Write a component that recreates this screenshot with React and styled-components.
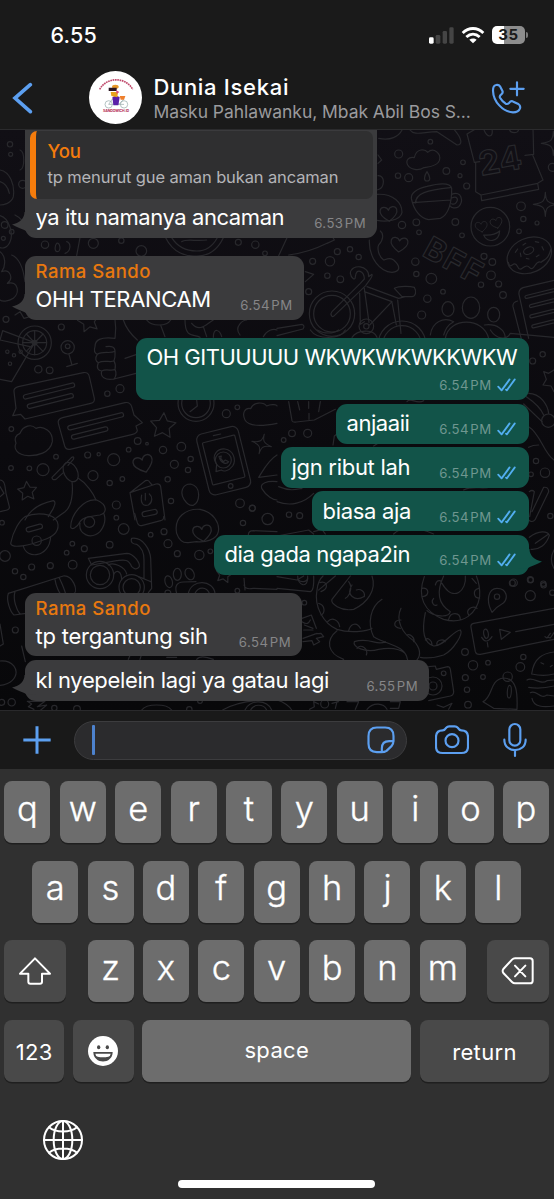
import React from "react";
import styled, { createGlobalStyle } from "styled-components";

const BLUE = "#5c9ff0";
const INCOMING = "#3b3b3d";
const OUTGOING = "#125449";

const GlobalStyle = createGlobalStyle`
  * { box-sizing: border-box; }
  body { margin: 0; background: #303030; font-family: Inter, "Liberation Sans", sans-serif; }
`;

const Screen = styled.main`
  width: 554px;
  height: 1199px;
  display: flex;
  flex-direction: column;
  overflow: hidden;
  background: #303030;
  color: #fff;
`;

/* ---------- Header ---------- */

const Header = styled.header`
  height: 130px;
  background: #1a1a1a;
  border-bottom: 1px solid #2b2b2d;
  display: flex;
  flex-direction: column;
`;

const StatusBar = styled.div`
  height: 64px;
  padding: 6px 26px 0 50.5px;
  display: flex;
  align-items: center;
  justify-content: space-between;
`;

const Clock = styled.span`
  font-size: 21.5px;
  font-weight: 500;
  letter-spacing: 0.2px;
`;

const StatusIcons = styled.div`
  display: flex;
  align-items: center;
  gap: 7px;
`;

const Battery = styled.div`
  display: flex;
  align-items: center;
  gap: 1px;
`;

const BatteryBody = styled.div`
  width: 33px;
  height: 18px;
  border-radius: 5px;
  background: linear-gradient(to right, #fff 36%, #8d8d8d 36%);
  color: #1a1a1a;
  font-size: 15px;
  font-weight: 700;
  line-height: 18px;
  letter-spacing: 0.5px;
  text-align: center;
`;

const BatteryTip = styled.div`
  width: 2px;
  height: 6px;
  border-radius: 0 3px 3px 0;
  background: #7a7a7a;
`;

const NavBar = styled.div`
  flex: 1;
  padding: 2px 29px 0 12px;
  display: flex;
  align-items: center;
`;

const BackButton = styled.button`
  all: unset;
  width: 76.5px;
  height: 32px;
  display: flex;
`;

const Avatar = styled.svg`
  width: 53.4px;
  height: 53.4px;
  border-radius: 50%;
  flex: none;
`;

const Titles = styled.div`
  flex: 1;
  margin-left: 11.5px;
  padding-top: 1px;
  white-space: nowrap;
`;

const Title = styled.h1`
  margin: 0;
  font-size: 22px;
  line-height: 27px;
  font-weight: 500;
  letter-spacing: 0.7px;
`;

const Subtitle = styled.div`
  font-size: 17.5px;
  line-height: 22px;
  letter-spacing: -0.05px;
  color: #9b9b9e;
`;

/* ---------- Chat ---------- */

const Chat = styled.section`
  position: relative;
  height: 580px;
  overflow: hidden;
  background: linear-gradient(#110f15, #0b0a0e 55%, #08080a);
`;

const Wallpaper = styled.svg`
  position: absolute;
  inset: 0;
  fill: none;
  stroke: #28282c;
  stroke-width: 3.6;
  stroke-linecap: round;
  stroke-linejoin: round;
`;

const DoodleText = styled.text`
  font-family: Inter, sans-serif;
  font-weight: 700;
`;

const MessageList = styled.div`
  position: relative;
  display: flex;
  flex-direction: column;
  gap: 18.5px;
  padding: 0 25.5px 0 25px;
`;

const Group = styled.div`
  display: flex;
  flex-direction: column;
  gap: 3.5px;
  align-items: ${(p) => (p.$out ? "flex-end" : "flex-start")};
`;

const BubbleBox = styled.div`
  position: relative;
  width: ${(p) => p.$w}px;
  height: ${(p) => p.$h}px;
  border-radius: ${(p) => (p.$cut ? "0 0 11px 11px" : "11px")};
  background: ${(p) => (p.$out ? OUTGOING : INCOMING)};
  padding: ${(p) => (p.$cut ? "1px" : "5px")} ${(p) => (p.$out ? "13px 7.5px 10.5px" : "11px 7.5px 10.5px")};
  display: flex;
  flex-direction: column;
  justify-content: space-between;
`;

const Line = styled.div`
  display: flex;
  flex-direction: ${(p) => (p.$stacked ? "column" : "row")};
  flex-grow: ${(p) => (p.$stacked ? 1 : 0)};
  align-items: flex-end;
  justify-content: space-between;
  margin-top: ${(p) => (p.$stacked ? "1px" : "auto")};
`;

const Body = styled.p`
  margin: 0;
  align-self: flex-start;
  white-space: nowrap;
  font-size: 22px;
  line-height: 26px;
  letter-spacing: ${(p) => p.$ls}px;
`;

const Sender = styled.div`
  font-size: 18.5px;
  line-height: 21px;
  font-weight: 500;
  letter-spacing: 0.5px;
  color: #e8780f;
`;

const Meta = styled.div`
  display: flex;
  align-items: center;
  gap: 5px;
  margin-bottom: -0.8px;
  white-space: nowrap;
  font-size: 13.2px;
  line-height: 16px;
  letter-spacing: 0.4px;
  word-spacing: -2.6px;
  color: ${(p) => (p.$out ? "#6f9790" : "#868688")};
`;

const Ticks = styled.svg`
  width: 19px;
  height: 14px;
  fill: none;
  stroke: #52aef0;
  stroke-width: 1.8;
  stroke-linecap: round;
  stroke-linejoin: round;
`;

const TailShape = styled.svg`
  position: absolute;
  bottom: 2px;
  width: 24px;
  height: 24px;
  fill: ${(p) => (p.$out ? OUTGOING : INCOMING)};
  ${(p) => (p.$out ? "right: -13.5px; transform: scaleX(-1);" : "left: -13px;")}
`;

const Quote = styled.blockquote`
  margin: 0 -6.5px 0 -6px;
  height: 68px;
  padding: 9px 12px 0;
  border-left: 6px solid #f57c0c;
  border-radius: 7px;
  background: #2f2f30;
  white-space: nowrap;
`;

const QuoteText = styled.div`
  margin-top: 5px;
  font-size: 16.5px;
  line-height: 20px;
  letter-spacing: -0.13px;
  color: #b4b4b8;
`;

const QuoteAuthor = styled.div`
  font-size: 18.5px;
  line-height: 22px;
  font-weight: 500;
  letter-spacing: -0.1px;
  color: #f57c0c;
`;

/* ---------- Composer ---------- */

const Composer = styled.div`
  height: 59px;
  flex: none;
  background: #191919;
  border-top: 1px solid #29292b;
  padding: 0 26px 0 22px;
  display: flex;
  align-items: center;
`;

const Field = styled.div`
  width: 332.5px;
  height: 39px;
  margin: 0 28.5px 0 22px;
  padding: 0 10.5px 0 16.5px;
  border: 1px solid #3c3c3e;
  border-radius: 20px;
  background: #2b2b2d;
  display: flex;
  align-items: center;
  justify-content: space-between;
`;

const Caret = styled.span`
  width: 3.5px;
  height: 29.5px;
  border-radius: 1px;
  background: #4d82cd;
`;

const LineIcon = styled.svg`
  display: block;
  flex: none;
  fill: none;
  stroke: ${(p) => p.$color || BLUE};
  stroke-width: ${(p) => p.$stroke || 6.5};
  stroke-linecap: round;
  stroke-linejoin: round;
`;

const MicSlot = styled.div`
  margin-left: auto;
`;

/* ---------- Keyboard ---------- */

const Keyboard = styled.section`
  flex: 1;
  background: #303030;
  padding: 12px 5px 0 4.4px;
  display: flex;
  flex-direction: column;
  gap: 17.7px;
`;

const KeyRow = styled.div`
  display: flex;
  justify-content: ${(p) => p.$justify || "center"};
`;

const Keys = styled.div`
  display: flex;
  gap: 9.4px;
`;

const Key = styled.button`
  all: unset;
  box-sizing: border-box;
  width: ${(p) => p.$w || 46}px;
  height: 62px;
  border-radius: 8px;
  background: ${(p) => (p.$dark ? "#494949" : "#6d6d6d")};
  box-shadow: 0 1.5px 0 #1f1f1f;
  display: flex;
  align-items: center;
  justify-content: center;
  font-size: 34.5px;
  font-weight: 300;
  -webkit-text-stroke: 0.35px #fff;
  padding-bottom: 7.5px;
`;

const WordKey = styled(Key)`
  font-size: 22px;
  font-weight: 400;
  -webkit-text-stroke: 0;
  letter-spacing: 0.35px;
  padding: ${(p) => (p.$drop ? "2px 0 0" : "0 0 2px")};
`;

const IconKey = styled(Key)`
  padding: 0;
`;

const BottomArea = styled.div`
  padding: 20.5px 0 0 38.5px;
`;

const HomeBar = styled.div`
  width: 197px;
  height: 7.5px;
  border-radius: 4px;
  background: #fff;
  margin: 2.5px auto 0;
`;

/* ---------- Small parts ---------- */

const Dots = ({ at }) => at.map(([x, y, r], i) => <circle key={i} cx={x} cy={y} r={r} />);

const Star = ({ x, y, r, turn = 0 }) => {
  const pts = Array.from({ length: 10 }, (_, i) => {
    const a = (Math.PI * i) / 5 - Math.PI / 2;
    const d = i % 2 ? r * 0.5 : r;
    return `${(Math.cos(a) * d).toFixed(1)},${(Math.sin(a) * d).toFixed(1)}`;
  }).join(" ");
  return <polygon points={pts} transform={`translate(${x} ${y}) rotate(${turn})`} />;
};

const Heart = ({ x, y, s = 1, turn = 0 }) => (
  <path
    transform={`translate(${x} ${y}) rotate(${turn}) scale(${s})`}
    d="M0 24C-18 12 -28 2 -25 -10C-22 -22 -5 -22 0 -9C5 -22 22 -22 25 -10C28 2 18 12 0 24Z"
  />
);

const Pill = ({ x, y, w, h, turn = 0, r }) => (
  <rect x={-w / 2} y={-h / 2} width={w} height={h} rx={r ?? h / 2} transform={`translate(${x} ${y}) rotate(${turn})`} />
);

const Sparkle = ({ x, y, s = 1, turn = 0 }) => (
  <path
    transform={`translate(${x} ${y}) rotate(${turn}) scale(${s})`}
    d="M0 -36C1 -10 6 -4 36 0C6 4 1 10 0 36C-1 10 -6 4 -36 0C-6 -4 -1 -10 0 -36Z"
  />
);

const region = (x, y) => `translate(${x} ${y - 130}) scale(0.33333)`;

const ChatWallpaper = () => (
  <Wallpaper width="554" height="580" viewBox="0 0 554 580" aria-hidden="true">
    <g transform={region(277, 125)}>
      <Dots at={[[365,87,12],[460,50,7],[558,112,7],[508,138,10],[549,152,6],[569,183,9],[395,158,12],[363,152,8],[375,300,11],[418,292,10],[426,322,7],[535,291,10],[555,331,7],[415,410,11],[418,447,8],[463,461,16],[498,500,7],[451,521,11],[434,570,12],[612,479,8],[621,394,9],[646,411,10],[642,451,13],[665,477,9],[678,510,10],[732,244,13],[739,282,8],[726,319,7],[780,294,6],[151,452,8],[190,463,10],[181,380,9],[219,373,8],[159,409,14],[245,396,8],[107,409,9],[95,500,9],[826,127,12]]} />
      <path d="M440 128C425 138 400 134 392 120C385 106 395 94 412 98C418 68 445 72 452 82C470 66 494 85 487 107C480 126 450 126 440 128Z" />
      <path d="M450 140C440 155 440 168 450 168C462 168 460 155 450 140Z" />
      <path d="M403 220C410 255 430 280 455 284L490 280C515 270 525 230 524 190C520 170 480 176 450 184C425 190 402 200 403 220ZM524 208C555 195 560 230 545 245C535 252 522 248 520 243M524 219C540 212 545 222 538 232C534 238 528 238 524 236M416 234C415 205 450 195 520 188M407 233L521 225" />
      <path d="M592 14L570 27L592 112M592 112L608 110M744 91L770 88L768 10M596 112V200L612 210L782 175L798 165L767 90M612 210L614 227L785 193L782 175M620 12C630 40 650 40 645 12M697 12C700 28 728 25 724 12" />
      <DoodleText x="612" y="152" fontSize="100" transform="rotate(-10 612 152)">24</DoodleText>
      <path d="M397 12C410 35 440 20 480 20L540 60C558 60 555 40 530 12M305 40C340 48 365 35 375 15" />
      <Sparkle x={805} y={238} />
      <Sparkle x={829} y={55} />
      <circle cx="640" cy="305" r="58" />
      <Heart x={613} y={304} s={0.7} turn={-8} />
      <Heart x={658} y={293} s={0.7} turn={-15} />
      <path d="M620 330Q650 333 668 318C666 352 630 355 620 330Z" />
      <ellipse cx="757" cy="391" rx="69" ry="52" transform="rotate(-24 757 391)" />
      <ellipse cx="755" cy="377" rx="16" ry="10" transform="rotate(-24 755 377)" />
      <path d="M694 412C700 440 710 400 722 425C732 448 742 410 758 428C772 442 775 402 792 412C802 402 812 408 822 372M715 382L722 372M732 395L730 384M738 360L746 355M775 350L785 352M795 365L800 375M778 395L786 390M748 400L756 402" />
      <DoodleText x="432" y="390" fontSize="94" letterSpacing="6" transform="rotate(29 432 390)">BFF</DoodleText>
      <path d="M277 345C275 400 310 440 345 442C370 440 372 425 350 405C335 395 325 405 320 405C305 395 300 370 305 360C320 345 320 325 310 318" />
      <Heart x={367} y={357} turn={5} />
      <path d="M300 208C350 205 375 235 375 262C370 290 320 290 300 286" />
      <Heart x={335} y={265} turn={-5} />
      <path d="M303 152C325 150 325 190 300 195M303 90L314 105L303 115M30 338L5 392M35 390C80 385 120 370 150 355L172 345L168 338M85 440L110 448L85 470" />
      <circle cx="165" cy="566" r="68" /><circle cx="165" cy="566" r="55" />
      <path d="M165 560L250 475L262 462C262 440 238 425 235 455C235 470 222 458 220 445C222 415 278 420 275 455L285 448C290 455 268 475 266 482L172 572C165 580 158 568 165 560M248 505L250 598L262 590M262 490L276 592M270 485L365 520L385 515M262 500L345 530L278 600M352 490C370 480 405 485 412 487C420 500 415 515 405 515L375 515ZM345 532L358 600M362 525L372 625" />
      <circle cx="268" cy="604" r="22" /><circle cx="268" cy="604" r="8" />
      <circle cx="375" cy="660" r="72" /><circle cx="375" cy="660" r="58" />
      <path d="M0 610L75 598Q85 602 78 612L0 632" />
      <ellipse cx="513" cy="552" rx="18" ry="22" /><ellipse cx="582" cy="548" rx="26" ry="32" /><ellipse cx="650" cy="569" rx="18" ry="22" />
      <path d="M505 640C515 575 620 575 635 640M460 630C465 590 500 575 530 590C510 600 505 615 500 630M622 600C660 595 685 615 685 640" />
      <path d="M735 650L708 545Q706 532 722 528M755 640L726 508Q724 494 738 488L831 466" />
      <Pill x={800} y={503} w={115} h={9} turn={-14} />
      <Pill x={806} y={532} w={100} h={9} turn={-14} />
      <Pill x={812} y={562} w={110} h={9} turn={-14} />
      <Pill x={818} y={592} w={110} h={9} turn={-14} />
    </g>

    <g transform={region(0, 125)}>
      <Dots at={[[30,58,8],[32,88,6],[280,355,15],[135,359,11],[364,347,8],[424,378,16],[715,352,9],[766,359,11],[795,385,7],[68,178,12],[18,583,9],[14,300,10],[35,320,7],[10,340,6]]} />
      <path d="M0 135C30 140 45 180 40 215C35 235 10 240 0 240M0 272C30 280 40 330 30 350C20 375 0 368 0 368M0 380C15 390 20 420 5 440C30 430 42 460 22 475C55 465 60 505 40 520C25 530 5 530 0 525M0 170C15 175 25 190 28 205M60 75C75 80 75 130 60 135M45 270C65 280 70 290 75 310M35 390C60 400 70 430 75 470" />
      <path d="M497 338C520 385 560 395 590 393M670 338C650 380 620 393 590 393M515 338C535 370 560 378 590 378C620 378 640 360 652 338M545 350C560 340 590 350 620 345M240 338L230 392M170 355C180 350 185 380 172 380C162 380 165 360 170 355ZM200 350C215 355 212 380 195 385M45 570L60 560L72 580L90 575" />
    </g>

    <g transform={region(0, 320)}>
      <Dots at={[[184,21,9],[115,148,11],[149,151,10],[322,221,8],[360,206,12],[34,327,7],[168,410,7],[33,444,7],[88,445,7],[129,449,18],[263,405,9],[296,403,5],[341,419,18],[279,467,15],[329,489,8],[367,477,7],[386,389,7],[413,363,10],[441,371,4],[489,390,11],[544,380,13],[523,433,12],[572,417,8],[564,450,8],[503,478,8],[349,555,12],[349,593,7],[513,543,8],[720,550,13],[757,565,9],[679,281,12],[712,262,7],[22,95,5],[42,106,5],[62,95,5],[30,131,5],[104,68,50],[104,68,36],[104,68,7],[203,82,20],[203,79,7]]} />
      <path d="M104 32V104M68 68H140M79 42L129 94M129 42L79 94M8 32L104 68L35 185L0 178M8 32L0 60M0 60L90 80M207 103L215 132M200 140L232 130" />
      <Star x={266} y={4} r={34} turn={-12} /><Star x={489} y={318} r={40} turn={4} /><Star x={82} y={514} r={30} turn={-5} />
      <path d="M345 0C350 30 345 50 345 55C300 50 285 60 285 80C280 95 285 100 292 103C283 115 288 125 295 128C288 145 295 152 305 153C300 170 315 182 342 177L408 160M292 103C310 92 330 102 345 94C345 80 335 78 318 80M295 128C312 118 335 130 342 122C347 110 345 98 345 94M305 153C320 145 335 155 345 148C348 138 345 128 342 122M345 148C350 160 348 170 342 177M370 0C380 30 395 45 412 60M375 115L408 104" />
      <path d="M440 0C455 20 500 20 512 0M482 16L495 50M555 0C555 60 585 40 600 52M575 10C600 40 620 10 640 0M640 52C640 20 660 30 665 50M790 50C800 30 820 25 831 30M610 20L620 50M720 45C700 20 730 0 740 0" />
      <path d="M42 215Q40 205 55 200L250 158Q265 155 268 170L283 235Q285 248 272 250L75 297L62 283L38 287L48 265Z" />
      <Pill x={147} y={213} w={158} h={13} turn={-14} /><Pill x={151} y={243} w={142} h={13} turn={-14} />
      <path d="M175 310Q172 298 188 293L375 248Q390 245 395 260L402 285L427 308L408 318L412 332Q410 340 398 343L210 388Q198 390 194 378Z" />
      <Pill x={287} y={304} w={172} h={13} turn={-14} /><Pill x={269} y={339} w={112} h={13} turn={-14} />
      <path d="M60 340C70 315 95 312 108 325C130 315 160 335 157 365C150 400 110 408 85 407C50 405 40 385 48 370C42 355 48 345 60 340Z" />
      <ellipse cx="212" cy="456" rx="20" ry="31" transform="rotate(-28 212 456)" />
      <path d="M156 472L215 412Q224 408 220 418L204 436M156 472Q156 482 168 478L190 458M216 485C220 520 215 560 195 575L160 600M235 475C260 490 280 520 288 540M75 600C90 570 120 550 160 542Q170 545 160 565L145 590" />
      <Heart x={430} y={430} s={1.15} turn={-18} />
      <Pill x={671} y={422} w={128} h={188} turn={-14} r={18} />
      <Pill x={671} y={420} w={100} h={130} turn={-14} r={3} />
      <circle cx="670" cy="420" r="24" />
      <path d="M648 455L650 433C630 405 655 385 675 387C700 390 710 420 698 438C685 455 670 455 664 450ZM657 410C662 430 680 435 686 425L676 420L670 425L662 415L664 408Z" />
      <circle cx="692" cy="498" r="7" /><path d="M640 347L662 342" />
      <path d="M735 300C725 280 735 262 752 266C760 245 790 245 800 258C815 250 831 255 831 258M735 300C745 318 780 320 831 310" />
      <circle cx="588" cy="250" r="54" /><circle cx="588" cy="250" r="43" /><path d="M588 222L592 258L570 275" />
      <Sparkle x={785} y={372} s={0.85} turn={15} />
      <path d="M831 405C805 420 790 450 776 472L831 465M831 485C800 482 780 490 785 505C800 530 820 540 831 540" />
      <path d="M405 600L390 518L436 482Q446 478 450 488L456 495M390 518L468 492Q480 490 482 500L495 600M425 525C420 550 430 560 445 555C458 548 458 530 448 522M436 520V540" />
      <path d="M572 492C545 492 540 520 552 538C560 550 570 558 580 556C600 545 605 500 572 492ZM0 480C15 480 15 500 18 520L28 560C30 570 20 570 0 575M0 500L12 520L0 530" />
    </g>

    <g transform={region(277, 330)}>
      <Dots at={[[20,330,7],[45,310,10],[92,310,12],[36,554,8],[68,557,9],[797,73,8],[767,93,9],[777,393,8],[804,428,14],[762,433,7],[820,558,8],[710,758,11],[761,750,8],[800,766,8]]} />
      <path d="M35 215L45 272Q48 278 58 276L112 270L175 238M62 215L68 240M95 215V235M125 245L130 215M96 250V268M168 345L172 318L180 312" />
      <path d="M0 515C40 530 80 520 110 490M5 470C40 485 60 478 75 475M0 618L95 600L110 612M110 605L135 598L145 612M390 215C400 200 420 225 440 212M290 348L310 335M560 480C590 465 620 480 640 470M350 612C370 590 420 590 470 612" />
      <path d="M100 0C120 30 190 30 205 0M225 22C240 0 290 -5 300 22M640 0C660 30 690 30 700 10L831 22M120 0C140 12 170 12 185 0" />
      <path d="M831 120L815 130L800 125L808 148L798 165L822 168L831 185M755 190C790 190 812 225 815 250M740 222L795 275M748 200C770 215 790 230 800 255M755 290C790 310 800 370 831 390M785 345C770 345 762 348 755 352" />
      <circle cx="814" cy="272" r="20" />
      <path d="M757 485Q765 478 772 485L758 560M755 570Q765 580 775 568L815 485Q815 470 800 472L765 545M757 622C785 600 812 603 817 616C808 645 785 660 762 658M775 640L815 612M831 660C820 680 822 700 831 715" />
      <path d="M0 740L60 750L80 738M62 748C75 760 90 755 92 745M175 738C150 760 130 775 125 780" />
    </g>

    <g transform={region(0, 500)}>
      <Dots at={[[15,168,16],[6,68,7],[95,201,9],[45,214,8],[70,231,8],[151,197,9],[218,194,13],[217,131,7],[200,158,7],[253,146,9],[329,134,10],[371,87,16],[452,104,7],[492,95,9],[504,131,12],[532,161,9],[598,165,14],[631,154,7],[803,57,17],[729,69,8],[757,24,9],[712,272,7],[46,390,9],[268,66,16],[300,225,41],[300,225,29],[395,262,38],[395,262,26],[110,122,14]]} />
      <path d="M32 130C40 90 60 60 75 50C110 35 160 40 172 65C180 90 165 110 130 120C90 135 35 148 32 130ZM70 138C78 178 148 175 152 110" />
      <Pill x={103} y={84} w={50} h={14} turn={-15} />
      <Pill x={449} y={39} w={46} h={15} turn={-12} />
      <path d="M404 40L412 68Q416 80 428 76L482 62Q492 60 491 50" />
      <path d="M240 70C235 100 270 122 300 95C312 80 318 60 312 42M212 82C212 45 250 -5 290 0C325 15 320 40 300 45C270 50 250 50 240 65C230 85 215 90 212 82" />
      <path d="M265 175L380 160C402 160 420 190 418 200C410 212 400 205 395 200C385 175 370 180 350 182L275 195ZM395 115C430 110 450 150 452 175L455 265L445 278M395 115C390 128 400 132 410 133C430 145 432 170 432 180V235M340 225C350 205 365 215 365 240M325 195C340 185 375 200 380 222M415 230C430 235 440 240 452 245" />
      <path d="M25 280L190 228C218 225 235 270 222 282M25 280C18 300 30 335 42 345L78 340M45 275C38 300 50 330 60 342M165 238C168 260 178 278 182 282M178 234C188 255 194 270 197 282" />
      <path d="M530 100C520 50 560 25 600 28C640 35 660 70 655 95C650 120 615 128 590 125L565 128Q540 130 530 100Z" />
      <Heart x={607} y={98} s={1.1} turn={-8} />
      <ellipse cx="506" cy="245" rx="11" ry="18" transform="rotate(-15 506 245)" /><ellipse cx="532" cy="223" rx="12" ry="18" /><ellipse cx="569" cy="222" rx="13" ry="18" transform="rotate(-25 569 222)" />
      <path d="M495 278C495 265 515 270 512 280M530 280Q520 248 550 246L588 245M565 280C575 235 640 240 645 280M585 280C595 258 620 260 628 280" />
      <Star x={672} y={224} r={26} turn={10} />
      <path d="M735 270L732 235M732 255Q735 270 760 265L831 268M745 105Q745 92 760 92L831 95M0 372L10 432L0 438M0 483C40 480 55 510 45 530C35 550 10 556 0 556M65 438L76 485M500 472H530M590 478C600 465 620 470 640 478M385 478L392 462M420 478L425 462" />
    </g>

    <g transform={region(277, 570)}>
      <Dots at={[[706,39,9],[760,29,9],[799,41,8],[760,77,15],[826,68,8],[564,246,10],[588,286,14],[633,278,7],[565,323,9],[618,321,7],[570,359,8],[573,404,10],[739,261,8],[730,291,13],[660,80,8],[692,320,14],[468,348,27],[468,348,12],[82,98,7],[143,402,12],[500,310,7]]} />
      <path d="M645 127C625 90 635 55 660 55C690 55 695 85 678 100C660 110 655 115 645 127ZM831 115L590 160Q580 162 582 172L595 245Q598 255 610 253L831 208M614 202Q628 225 645 200M631 218L633 231M668 178L673 208L700 187ZM716 185L831 163M804 200L810 204L820 190M814 202L820 204L831 188" />
      <Pill x={627} y={191} w={14} h={28} turn={-10} />
      <path d="M764 312C770 262 800 250 831 246M764 312Q800 320 831 312M750 330C770 318 790 348 810 332L831 330M755 352Q790 358 831 348M760 368C780 358 790 390 810 375L831 378M765 385C770 412 800 412 831 408M792 278L800 282M820 290L826 286" />
      <path d="M618 395C650 380 635 330 680 324C720 325 722 370 720 418M618 395L650 415L720 418" />
      <Pill x={697} y={365} w={12} h={38} turn={3} />
      <path d="M455 290L475 288L478 298L512 290Q518 290 520 298L530 365Q530 375 520 378L455 392" />
      <path d="M120 60C110 110 140 160 180 178C215 190 270 185 285 175M285 18C300 60 270 100 230 118C190 125 160 100 165 88L220 18M315 88C280 110 270 160 290 200C330 225 385 225 392 270M180 182C145 210 150 250 200 268M372 115C355 150 375 190 410 212C430 235 432 255 420 270M325 215C300 230 280 200 232 215C225 230 265 250 305 238C350 230 390 240 390 265M120 60C122 40 130 25 138 18" />
      <path d="M128 38C150 30 158 55 132 65M125 100C145 105 145 130 132 135M152 155C165 140 185 150 188 170M215 182C220 160 240 155 250 175M215 35C230 55 215 80 205 85M238 60C250 55 265 65 262 80M225 45C205 75 235 95 260 80M240 235C250 220 275 235 268 255M372 150C350 150 345 170 370 175M390 195C400 190 415 205 410 215" />
      <path d="M442 20C420 80 440 125 500 148C560 165 600 130 608 80C610 50 605 35 598 18M500 18C480 60 480 100 520 125C515 145 470 140 450 122M565 18C570 60 530 100 495 40M445 128C430 200 450 222 470 228C500 230 530 180 550 180C560 190 530 240 500 255Q460 268 430 262M435 55C455 50 460 75 438 80M470 85C460 95 470 110 480 105M490 45C500 30 480 25 475 45M515 148C520 125 550 125 550 150M575 135C565 120 585 105 600 115M608 85C590 85 585 60 605 55M598 40L585 25M445 210C450 200 465 210 465 225M480 225C475 210 500 205 505 215" />
      <path d="M0 55L100 65Q112 62 110 18M62 18C60 45 95 60 92 18M75 145L103 135L118 175M78 205L120 190M82 165L108 175M80 180H108M78 215L105 212L110 225L128 215L118 205L140 200L132 190L112 192M75 155C90 165 95 160 100 150" />
      <path d="M0 390C20 395 40 410 45 422M110 395L112 410L98 418M180 395L175 415M110 395L125 402M165 400L185 395M210 395H245L235 418M270 418C290 395 320 400 330 418M340 395H370L365 415H340M480 405L500 412L525 400L515 418" />
    </g>

    <g transform={region(0, 700)}>
      <Dots at={[[35,7,11],[5,7,9],[163,24,8],[231,27,10],[600,3,7],[568,28,8]]} />
      <path d="M82 4H135L112 20L140 15L120 32M82 4L95 12L85 20L102 28M425 30C440 10 500 10 515 30M668 30C700 10 750 2 790 0M735 30C745 0 800 -5 815 30M752 30C760 12 790 10 800 30" />
    </g>
  </Wallpaper>
);

const Tail = ({ out }) => (
  <TailShape $out={out} viewBox="0 0 24 24">
    <path d="M12.5 0C12.5 6 8 11 0 12.5C5 15.5 11 17 15 19.5L24 20V0Z" />
  </TailShape>
);

const DoubleTick = () => (
  <Ticks viewBox="0 0 19 14">
    <path d="M1.2 8.6L4.6 12.4L12.6 1.4M9 11.6L9.8 12.4L17.8 1.4" />
  </Ticks>
);

const Bubble = ({ out, w, h, sender, text, ls, time, tail, stacked, cut, children }) => (
  <BubbleBox $out={out} $w={w} $h={h} $cut={cut}>
    {tail && <Tail out={out} />}
    {sender && <Sender>{sender}</Sender>}
    {children}
    <Line $stacked={stacked}>
      <Body $ls={ls}>{text}</Body>
      <Meta $out={out}>
        {time}
        {out && <DoubleTick />}
      </Meta>
    </Line>
  </BubbleBox>
);

const letters = (s) => s.split("").map((k) => <Key key={k}>{k}</Key>);

export default function App() {
  return (
    <Screen>
      <GlobalStyle />

      <Header>
        <StatusBar>
          <Clock>6.55</Clock>
          <StatusIcons>
            <svg width="25" height="17" viewBox="0 0 75 51">
              <rect x="0" y="31" width="14" height="19" rx="4" fill="#fff" />
              <rect x="20" y="24" width="14" height="26" rx="4" fill="#454545" />
              <rect x="41" y="12" width="13" height="38" rx="4" fill="#454545" />
              <rect x="61" y="1" width="13" height="49" rx="4" fill="#454545" />
            </svg>
            <svg width="24" height="18" viewBox="0 0 72 54" fill="none" stroke="#fff" strokeWidth="8.5">
              <path d="M5 21C23 3 49 3 67 21" />
              <path d="M16 33C28 22 44 22 56 33" />
              <path d="M36 52L25 41C31 36 41 36 47 41Z" fill="#fff" stroke="none" />
            </svg>
            <Battery>
              <BatteryBody>35</BatteryBody>
              <BatteryTip />
            </Battery>
          </StatusIcons>
        </StatusBar>
        <NavBar>
          <BackButton aria-label="Back">
            <LineIcon width="22" height="32" viewBox="0 0 66 96" $stroke={11}>
              <path d="M55 8L9 48L55 89" strokeLinejoin="miter" />
            </LineIcon>
          </BackButton>
          <Avatar viewBox="265 213 160 160">
            <rect x="265" y="213" width="160" height="160" fill="#fff" />
            <path d="M297 268C318 230 375 230 396 268" fill="none" stroke="#c04a6c" strokeWidth="5" strokeDasharray="5 2" />
            <g fill="none" stroke="#8fa6a6" strokeWidth="2">
              <circle cx="324" cy="313" r="11" />
              <circle cx="370" cy="313" r="11" />
              <path d="M324 313L335 297L355 313L370 297M324 313H370" />
            </g>
            <path d="M335 292Q346 284 357 292L353 316H338Z" fill="#5a1fa8" />
            <path d="M330 276H352L350 292L332 288Z" fill="#e7a21c" />
            <ellipse cx="344" cy="260" rx="10" ry="6" fill="#e8992a" />
            <path d="M324 263H348V273H324Z" fill="#2a1420" />
            <path d="M346 270L356 276L348 282Z" fill="#d9477c" />
            <path d="M357 288H374L370 299H360Z" fill="#ef7f2c" />
            <text x="346" y="335" textAnchor="middle" fontSize="10.5" fontWeight="700" fill="#b3234f" textLength="78">SANDOWICH.ID</text>
          </Avatar>
          <Titles>
            <Title>Dunia Isekai</Title>
            <Subtitle>Masku Pahlawanku, Mbak Abil Bos S...</Subtitle>
          </Titles>
          <LineIcon width="34" height="34" viewBox="642 243 102 102" $stroke={6.5}>
            <path d="M657 255C650 256 648 264 648 272C649 305 677 335 708 337C718 337 726 333 729 325C731 319 728 315 724 312L709 305C704 302 700 304 696 309C693 312 690 313 686 311C679 306 673 300 669 293C667 289 669 286 673 283C677 280 678 276 676 272L669 259C666 254 662 254 657 255Z" />
            <path d="M720 247V286M700 266.500H740" />
          </LineIcon>
        </NavBar>
      </Header>

      <Chat>
        <ChatWallpaper />
        <MessageList>
          <Group>
            <Bubble w={352} h={107.5} cut tail text="ya itu namanya ancaman" ls={-0.43} time="6.53 PM">
              <Quote>
                <QuoteAuthor>You</QuoteAuthor>
                <QuoteText>tp menurut gue aman bukan ancaman</QuoteText>
              </Quote>
            </Bubble>
          </Group>
          <Group>
            <Bubble w={278.5} h={63.5} tail sender="Rama Sando" text="OHH TERANCAM" ls={-0.38} time="6.54 PM" />
          </Group>
          <Group $out>
            <Bubble out w={392.5} h={62.2} stacked text="OH GITUUUUU WKWKWKWKKWKW" ls={-0.5} time="6.54 PM" />
            <Bubble out w={192.5} h={40.2} text="anjaaii" ls={-0.45} time="6.54 PM" />
            <Bubble out w={247.5} h={40.2} text="jgn ribut lah" ls={-0.29} time="6.54 PM" />
            <Bubble out w={216.5} h={40.2} text="biasa aja" ls={-0.3} time="6.54 PM" />
            <Bubble out w={314.5} h={40.2} tail text="dia gada ngapa2in" ls={-0.37} time="6.54 PM" />
          </Group>
          <Group>
            <Bubble w={277} h={63} sender="Rama Sando" text="tp tergantung sih" ls={-0.24} time="6.54 PM" />
            <Bubble w={404} h={40.7} tail text="kl nyepelein lagi ya gatau lagi" ls={-0.36} time="6.55 PM" />
          </Group>
        </MessageList>
      </Chat>

      <Composer>
        <LineIcon width="30" height="30" viewBox="0 0 90 90" $stroke={9}>
          <path d="M45 4V86M4 45H86" strokeLinecap="butt" />
        </LineIcon>
        <Field>
          <Caret />
          <LineIcon width="28" height="28" viewBox="270.500 467.500 84 84">
            <path d="M313 546H300C283 546 275 538 275 521V498C275 480 283 472 300 472H325C342 472 350 480 350 498V512C350 520 348 524 344 528L329 542C325 545 320 546 313 546Z" />
            <path d="M315 545V535C315 520 322 513 337 513H349" />
          </LineIcon>
        </Field>
        <LineIcon width="34" height="30" viewBox="474 463 102 90">
          <path d="M477 499C477 485 485 479 497 479C503 479 505 476 508 471C510 468 512 467 517 467H533C538 467 540 468 542 471C545 476 547 479 553 479C565 479 573 485 573 499V528C573 541 566 547 553 547H497C484 547 477 541 477 528Z" />
          <circle cx="525" cy="510" r="19.500" />
        </LineIcon>
        <MicSlot>
          <LineIcon width="26" height="36" viewBox="677 455 78 108">
            <rect x="699" y="461" width="33" height="65" rx="16.500" />
            <path d="M684 508C684 550 748 550 748 508M716 540V557" />
          </LineIcon>
        </MicSlot>
      </Composer>

      <Keyboard>
        <KeyRow>
          <Keys>{letters("qwertyuiop")}</Keys>
        </KeyRow>
        <KeyRow>
          <Keys>{letters("asdfghjkl")}</Keys>
        </KeyRow>
        <KeyRow $justify="space-between">
          <IconKey $dark $w={62}>
            <LineIcon width="34" height="30" viewBox="55 79 102 90" $color="#fff" $stroke={6}>
              <path d="M106 86L61 132H86V156Q86 162 92 162H121Q127 162 127 156V132H151Z" />
            </LineIcon>
          </IconKey>
          <Keys>{letters("zxcvbnm")}</Keys>
          <IconKey $dark $w={62}>
            <LineIcon width="34" height="30" viewBox="674 560 102 90" $color="#fff" $stroke={6}>
              <path d="M716 567H761Q769 567 769 575V634Q769 642 761 642H716Q711 642 707 638L681 611Q677 605 681 599L707 571Q711 567 716 567ZM716 589L747 621M747 589L716 621" />
            </LineIcon>
          </IconKey>
        </KeyRow>
        <KeyRow $justify="space-between">
          <WordKey $dark $drop $w={59.5}>123</WordKey>
          <IconKey $dark $w={61}>
            <svg width="30" height="30" viewBox="-45 -45 90 90">
              <circle r="45" fill="#fff" />
              <ellipse cx="-13" cy="-11" rx="5" ry="6" fill="#494949" />
              <ellipse cx="13" cy="-11" rx="5" ry="6" fill="#494949" />
              <path d="M-29 3H29C29 41 -29 41 -29 3Z" fill="#494949" />
              <path d="M-23 8H23Q22 16 16 17Q0 20 -16 17Q-22 16 -23 8Z" fill="#fff" />
            </svg>
          </IconKey>
          <WordKey $w={269}>space</WordKey>
          <WordKey $dark $drop $w={129}>return</WordKey>
        </KeyRow>
        <BottomArea>
          <LineIcon width="40" height="40" viewBox="-60 -60 120 120" $color="#fff" $stroke={6}>
            <circle r="57" />
            <ellipse rx="28" ry="57" />
            <path d="M0 -57V57M-57 0H57M-42 -38C-22 -21 22 -21 42 -38M-42 38C-22 21 22 21 42 38" />
          </LineIcon>
        </BottomArea>
        <HomeBar />
      </Keyboard>
    </Screen>
  );
}
